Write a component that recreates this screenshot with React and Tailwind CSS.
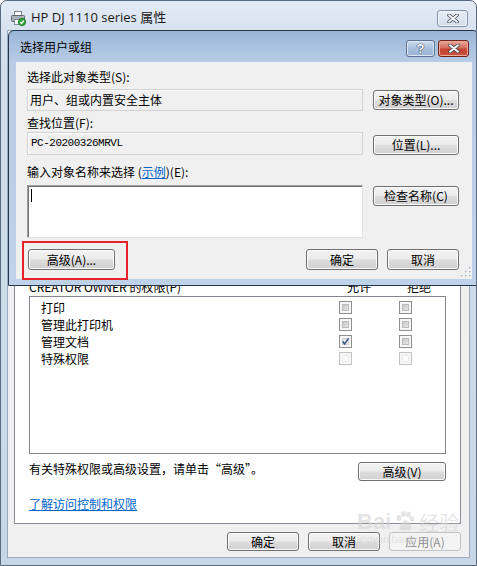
import React from 'react';

function PrinterIcon(props){return(
  <svg viewBox="0 0 16 16" {...props}>
    <rect x="4.5" y="1.5" width="7" height="4" fill="#fff" stroke="#808890"/>
    <rect x="1.5" y="5.5" width="13" height="6" rx="1" fill="#a9b1ba" stroke="#5e666e"/>
    <rect x="4.5" y="9.5" width="7" height="5" fill="#fff" stroke="#808890"/>
    <circle cx="12" cy="12" r="3.6" fill="#35a83f" stroke="#1e7a27"/>
    <path d="M10.2 12.1l1.3 1.4 2.4-2.8" stroke="#fff" strokeWidth="1.3" fill="none"/>
  </svg>
);}

function XGlyph(props){return(
  <svg viewBox="0 0 12 9" {...props}>
    <path d="M2 1.2L10 7.8M10 1.2L2 7.8" stroke="#3b4756" strokeWidth="3.4" strokeLinecap="round"/>
    <path d="M2 1.2L10 7.8M10 1.2L2 7.8" stroke="#fff" strokeWidth="1.8" strokeLinecap="round"/>
  </svg>
);}

function Grip(props){return(
  <svg viewBox="0 0 10 10" {...props}>
    {[[8,0],[8,4],[4,4],[8,8],[4,8],[0,8]].map(([x,y],i)=>(
      <g key={i}><rect x={x+1} y={y+1} width="1.5" height="1.5" fill="#fff"/><rect x={x} y={y} width="1.5" height="1.5" fill="#a9b4c0"/></g>
    ))}
  </svg>
);}

function Btn({ children, className = '', disabled }){
  return (
    <div className={`flex items-center justify-center rounded-[3px] border text-[12px] leading-none ${disabled ? 'border-[#bfc3c7] bg-[#f4f4f4] text-[#8d8d8d]' : 'border-[#707070] bg-[linear-gradient(#f3f3f3_0%,#ebebeb_48%,#dddddd_52%,#d0d0d0_100%)] text-black shadow-[inset_0_0_0_1px_#fbfbfb]'} ${className}`}>
      {children}
    </div>
  );
}

function Box({ checked, light }){
  return (
    <div className={`relative w-[13px] h-[13px] border p-[2px] bg-[#f6f6f6] ${light ? 'border-[#c4c4c4]' : 'border-[#8e8f8f]'}`}>
      <div className={`w-full h-full border ${light ? 'border-[#ececec] bg-[#fbfbfb]' : checked ? 'border-[#cfcfcf] bg-[linear-gradient(135deg,#e0e0e0,#f2f2f2)]' : 'border-[#bdbdbd] bg-[linear-gradient(135deg,#c6c6c6,#e6e6e6)]'}`}/>
      {checked && (
        <svg viewBox="0 0 13 13" className="absolute inset-[-1px] w-[13px] h-[13px]">
          <path d="M3.6 6.4L5.6 9L9.6 3.4" stroke="#3c5789" strokeWidth="1.6" fill="none"/>
        </svg>
      )}
    </div>
  );
}

const perms = [
  { name: '打印' },
  { name: '管理此打印机' },
  { name: '管理文档', checked: true },
  { name: '特殊权限', light: true },
];

export default function App(){
  return (
    <div className="relative w-[477px] h-[566px] overflow-hidden rounded-t-[7px] border border-[#5a6b7e] bg-[linear-gradient(#e3ebf5,#d4dfec_40px,#c8d7e8)] flex flex-col text-[12px] text-black font-['Noto_Sans_CJK_SC',sans-serif]">
      {/* outer title bar */}
      <div className="h-[29px] shrink-0 flex items-center pt-[5px] pl-[9px] pr-[8px]">
        <PrinterIcon className="w-4 h-4"/>
        <span className="ml-[5px] text-[13px] font-['Open_Sans','Noto_Sans_CJK_SC',sans-serif] text-[#1a1a1a]">HP DJ 1110 series 属性</span>
        <div className="ml-auto w-[31px] h-[17px] rounded-[3px] border border-[#8193a8] bg-[linear-gradient(#e6edf5,#d3deea)] shadow-[inset_0_0_0_1px_#f1f5fa] flex items-center justify-center">
          <XGlyph className="w-[12px] h-[9px]"/>
        </div>
      </div>

      {/* outer body */}
      <div className="mx-[6px] mb-[7px] flex-1 border border-[#9aabbf] bg-[#f0f0f0] pl-[6px] pr-[8px] pt-[21px] pb-[6px] flex flex-col">
        <div className="border border-[#898c95] bg-white px-[14px] pb-[11px] flex flex-col">
          <div className="h-[226px]"/>
          <div className="h-[16px] leading-[16px] grid grid-cols-[1fr_40px_40px] gap-x-[20px] pr-[7px]">
            <span>CREATOR OWNER 的权限(P)</span>
            <span className="text-center">允许</span>
            <span className="text-center">拒绝</span>
          </div>
          <div className="mt-[1px] h-[158px] border border-[#828790] bg-white pt-[2px]">
            {perms.map(p=>(
              <div key={p.name} className="h-[17px] grid grid-cols-[1fr_13px_13px] gap-x-[47px] items-center pl-[11px] pr-[33px]">
                <span className="leading-[17px]">{p.name}</span>
                <Box checked={p.checked} light={p.light}/>
                <Box light={p.light}/>
              </div>
            ))}
          </div>
          <div className="mt-[8px] flex items-start justify-between">
            <span className="leading-[16px] -mt-[1px]">有关特殊权限或高级设置，请单击“高级”。</span>
            <Btn className="w-[88px] h-[19px]">高级(V)</Btn>
          </div>
          <div className="mt-[15px] h-[16px] leading-[16px]">
            <span className="text-[#0066cc] underline">了解访问控制和权限</span>
          </div>
        </div>
        <div className="mt-[8px] flex justify-end gap-[9px]">
          <Btn className="w-[72px] h-[19px]">确定</Btn>
          <Btn className="w-[72px] h-[19px]">取消</Btn>
          <Btn className="w-[72px] h-[19px]" disabled>应用(A)</Btn>
        </div>
      </div>

      {/* watermark */}
      <div className="absolute left-[356px] top-[508px] flex flex-col items-start text-[#d4d4d4]/60 pointer-events-none">
        <div className="flex items-end gap-[2px]">
          <span className="text-[22px] font-bold font-['Liberation_Sans',sans-serif] leading-none">Bai</span>
          <svg viewBox="0 0 24 24" className="w-[24px] h-[24px]" fill="currentColor"><ellipse cx="6" cy="9" rx="2.4" ry="3"/><ellipse cx="10.5" cy="5" rx="2.4" ry="3"/><ellipse cx="15.5" cy="5.5" rx="2.4" ry="3"/><ellipse cx="19" cy="10" rx="2.3" ry="2.8"/><path d="M12.5 11c3 0 6 5 6 8s-3 3-6 2c-3 1-6 1-6-2s3-8 6-8z"/></svg>
          <span className="text-[20px] leading-none">经验</span>
        </div>
        <span className="text-[10px] leading-[14px] font-['Liberation_Sans',sans-serif]">jingyan.baidu.com</span>
      </div>

      {/* select users or groups dialog */}
      <div className="absolute left-[7px] top-[29px] w-[471px] h-[256px] rounded-t-[6px] border border-[#26374a] bg-[linear-gradient(#9ab6d8,#b7cce5_31px,#bed3ea)] flex flex-col pl-[7px] pr-[6px] pb-[6px]">
        <div className="h-[31px] shrink-0 flex items-center pl-[4px]">
          <span className="text-[12px]">选择用户或组</span>
          <div className="ml-auto mr-[3px] self-start mt-[9px] flex gap-[3px]">
            <div className="w-[29px] h-[17px] rounded-[3px] border border-[#5d7391] bg-[linear-gradient(#d0def0,#a9c0dd_50%,#9cb5d6)] shadow-[inset_0_0_0_1px_#dbe6f3] flex items-center justify-center">
              <span className="text-white text-[13px] font-bold leading-none font-['Liberation_Sans',sans-serif] [text-shadow:0_0_1px_#2f3e52,0_0_1px_#2f3e52,0_0_1px_#2f3e52]">?</span>
            </div>
            <div className="w-[31px] h-[17px] rounded-[3px] border border-[#6f2318] bg-[linear-gradient(#e9a99b,#d4705f_45%,#c34231_55%,#c9543f)] shadow-[inset_0_0_0_1px_#eca99c] flex items-center justify-center">
              <XGlyph className="w-[12px] h-[9px]"/>
            </div>
          </div>
        </div>

        <div className="relative flex-1 bg-[#f0f0f0] pl-[11px] pr-[13px] pt-[7px] flex flex-col">
          <div className="h-[16px] leading-[16px]">选择此对象类型(S):</div>
          <div className="mt-[4px] flex justify-between items-start">
            <div className="w-[336px] h-[22px] border border-[#d3d3d3] bg-[#f0f0f0] shadow-[inset_1px_1px_0_#fafafa] flex items-center pl-[2px]">用户、组或内置安全主体</div>
            <Btn className="mt-[1px] w-[86px] h-[20px]">对象类型(O)...</Btn>
          </div>
          <div className="mt-[4px] h-[16px] leading-[16px]">查找位置(F):</div>
          <div className="mt-[1px] flex justify-between items-start">
            <div className="w-[336px] h-[23px] border border-[#d3d3d3] bg-[#f0f0f0] shadow-[inset_1px_1px_0_#fafafa] flex items-center pl-[3px] font-['Liberation_Mono',monospace] text-[11px] tracking-[-0.5px]">PC-20200326MRVL</div>
            <Btn className="mt-[3px] w-[86px] h-[20px]">位置(L)...</Btn>
          </div>
          <div className="mt-[9px] h-[16px] leading-[16px]">输入对象名称来选择 (<span className="text-[#0066cc] underline">示例</span>)(E):</div>
          <div className="mt-[5px] flex justify-between items-start">
            <div className="w-[336px] h-[53px] border border-t-[#a0a0a0] border-l-[#a0a0a0] border-r-[#e3e3e3] border-b-[#e3e3e3] bg-white shadow-[inset_1px_1px_0_#6f6f6f] pl-[3px] pt-[3px]">
              <div className="w-px h-[13px] bg-black"/>
            </div>
            <Btn className="mt-[1px] w-[86px] h-[20px]">检查名称(C)</Btn>
          </div>
          <div className="mt-[11px] flex items-center">
            <Btn className="ml-[1px] w-[87px] h-[21px]">高级(A)...</Btn>
            <div className="ml-auto flex gap-[9px]">
              <Btn className="w-[72px] h-[21px]">确定</Btn>
              <Btn className="w-[72px] h-[21px]">取消</Btn>
            </div>
          </div>
          <Grip className="absolute right-[1px] bottom-[2px] w-[10px] h-[10px]"/>
        </div>
      </div>

      {/* red highlight annotation */}
      <div className="absolute left-[21px] top-[240px] w-[106px] h-[39px] border-2 border-[#e5232b]"/>
    </div>
  );
}
